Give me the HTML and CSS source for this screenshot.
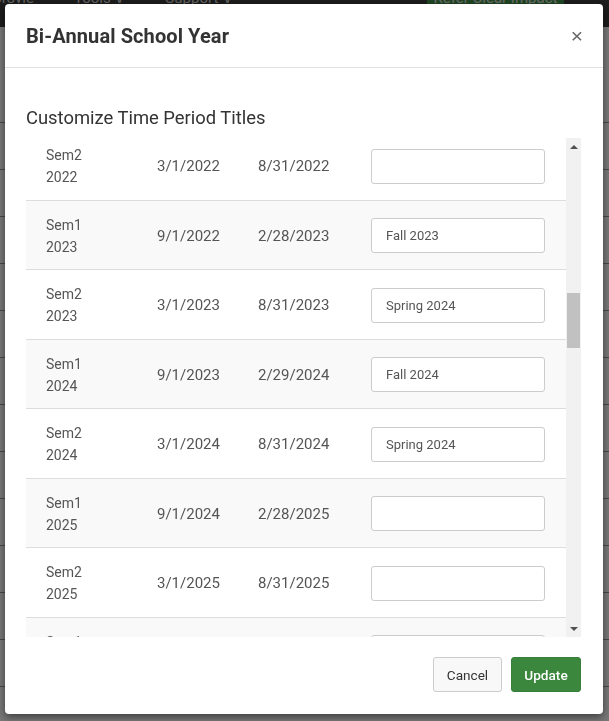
FILE: index.html
```html
<!DOCTYPE html>
<html lang="en">
<head>
<meta charset="UTF-8">
<meta name="viewport" content="width=device-width, initial-scale=1.0">
<title>Bi-Annual School Year</title>
<link rel="stylesheet" href="styles.css">
</head>
<body>

<div class="page">
  <div class="topnav">
    <span class="nav-item nav-first">Improvie</span>
    <span class="nav-item">Tools &#8744;</span>
    <span class="nav-item">Support &#8744;</span>
    <span class="nav-spacer"></span>
    <span class="nav-refer">Refer Clear Impact</span>
  </div>
  <div class="page-body">
    <div class="page-row"></div>
    <div class="page-row"></div>
    <div class="page-row"></div>
    <div class="page-row"></div>
    <div class="page-row"></div>
    <div class="page-row"></div>
    <div class="page-row"></div>
    <div class="page-row"></div>
    <div class="page-row"></div>
    <div class="page-row"></div>
    <div class="page-row"></div>
    <div class="page-row"></div>
    <div class="page-row"></div>
  </div>
</div>

<div class="backdrop"></div>

<div class="modal">
  <div class="modal-header">
    <h3 class="modal-title">Bi-Annual School Year</h3>
    <button class="close">&times;</button>
  </div>
  <div class="modal-body">
    <h4 class="section-title">Customize Time Period Titles</h4>
    <div class="period-scroll">
      <div class="period-view">
        <table class="period-table">
          <tbody id="periods"></tbody>
        </table>
      </div>
      <div class="scrollbar">
        <div class="sb-btn"><span class="arrow-up"></span></div>
        <div class="sb-track"><div class="sb-thumb"></div></div>
        <div class="sb-btn"><span class="arrow-down"></span></div>
      </div>
    </div>
  </div>
  <div class="modal-footer">
    <button class="btn btn-default">Cancel</button>
    <button class="btn btn-success">Update</button>
  </div>
</div>

<script>
  const tbody = document.getElementById('periods');
  const titles = {
    'Sem1 2023': 'Fall 2023',
    'Sem2 2023': 'Spring 2024',
    'Sem1 2024': 'Fall 2024',
    'Sem2 2024': 'Spring 2024'
  };

  function febEnd(year) {
    return year % 4 === 0 ? 29 : 28;
  }

  // only the periods that fit in the scrolled view
  const periods = [];
  for (let year = 2022; year <= 2026; year++) {
    for (let sem = 1; sem <= 2; sem++) {
      if (year === 2022 && sem === 1) continue;
      if (year === 2026 && sem === 2) continue;
      periods.push({ sem, year });
    }
  }

  periods.forEach(p => {
    const key = `Sem${p.sem} ${p.year}`;
    const start = p.sem === 1 ? `9/1/${p.year - 1}` : `3/1/${p.year}`;
    const end = p.sem === 1 ? `2/${febEnd(p.year)}/${p.year}` : `8/31/${p.year}`;
    const row = document.createElement('tr');
    if (p.sem === 1) row.className = 'striped';
    row.innerHTML =
      `<td class="col-name">Sem${p.sem}<br>${p.year}</td>` +
      `<td class="col-date col-start">${start}</td>` +
      `<td class="col-date col-end">${end}</td>` +
      `<td class="col-title"><input class="form-control" type="text" value="${titles[key] || ''}"></td>`;
    tbody.appendChild(row);
  });
</script>

</body>
</html>
```

FILE: styles.css
```css
* {
  box-sizing: border-box;
}
body {
  font-family: Roboto, "Liberation Sans", Arial, sans-serif;
  margin: 0;
  width: 609px;
  height: 721px;
  overflow: hidden;
  background: #ffffff;
}
.page {
  height: 721px;
}
.topnav {
  display: flex;
  align-items: flex-start;
  height: 27px;
  background: #3c3c3c;
  color: #cfcfcf;
  font-size: 15px;
  overflow: hidden;
}
.nav-item {
  margin-left: 40px;
  line-height: 20px;
  margin-top: -12px;
}
.nav-first {
  margin-left: -24px;
}
.nav-spacer {
  flex: 1;
}
.nav-refer {
  background: #43934a;
  color: #e6e6e6;
  width: 137px;
  text-align: center;
  margin-right: 45px;
  height: 22px;
  line-height: 20px;
  margin-top: -12px;
}
.page-body {
  padding-top: 95px;
}
.page-row {
  height: 47px;
  border-top: 1px solid #9a9a9a;
}
.backdrop {
  position: fixed;
  inset: 0;
  background: rgba(0, 0, 0, 0.53);
}
.modal {
  position: fixed;
  top: 4px;
  left: 5px;
  width: 598px;
  height: 710px;
  background: #ffffff;
  border-radius: 4px;
  box-shadow: 0 3px 9px rgba(0, 0, 0, 0.5);
  display: flex;
  flex-direction: column;
}
.modal-header {
  display: flex;
  align-items: center;
  justify-content: space-between;
  height: 64px;
  padding: 0 21px;
  border-bottom: 1px solid #e2e2e2;
}
.modal-title {
  margin: 0;
  font-size: 20px;
  font-weight: bold;
  color: #333333;
  letter-spacing: 0.1px;
}
.close {
  background: none;
  border: none;
  padding: 0;
  margin-right: -1px;
  font-size: 21px;
  color: #666666;
  cursor: pointer;
  font-family: "Liberation Sans", Arial, sans-serif;
}
.modal-body {
  flex: 1;
  padding: 0 22px 0 21px;
}
.section-title {
  margin: 39px 0 9px;
  font-size: 18.4px;
  line-height: 22px;
  font-weight: normal;
  color: #333333;
}
.period-scroll {
  display: flex;
  height: 499px;
}
.period-view {
  flex: 1;
  overflow: hidden;
}
.period-table {
  width: 100%;
  margin-top: -7px;
  border-collapse: collapse;
  font-size: 14px;
  color: #555555;
}
.period-table td {
  padding: 13px 0 11px;
  line-height: 22.25px;
  border-top: 1px solid #dddddd;
  vertical-align: middle;
}
.period-table tr:first-child td {
  border-top: none;
}
.period-table tr.striped {
  background: #f9f9f9;
}
.col-name {
  width: 131px;
  padding-left: 20px !important;
}
.col-date {
  font-size: 15px;
}
.col-start {
  width: 101px;
}
.col-end {
  width: 113px;
}
.col-title {
  padding-right: 20px !important;
}
.form-control {
  display: block;
  width: 174px;
  height: 35px;
  padding: 0 14px;
  border: 1px solid #cccccc;
  border-radius: 3px;
  font-family: inherit;
  font-size: 13px;
  color: #555555;
  background: #ffffff;
}
.scrollbar {
  width: 15px;
  background: #f1f1f1;
  display: flex;
  flex-direction: column;
}
.sb-btn {
  height: 17px;
  display: flex;
  align-items: center;
  justify-content: center;
}
.arrow-up {
  width: 0;
  height: 0;
  border-left: 4px solid transparent;
  border-right: 4px solid transparent;
  border-bottom: 4px solid #505050;
}
.arrow-down {
  width: 0;
  height: 0;
  border-left: 4px solid transparent;
  border-right: 4px solid transparent;
  border-top: 4px solid #505050;
}
.sb-track {
  flex: 1;
  padding: 0 1px;
}
.sb-thumb {
  margin-top: 138px;
  height: 55px;
  background: #c1c1c1;
}
.modal-footer {
  display: flex;
  justify-content: flex-end;
  gap: 9px;
  padding: 20px 22px 22px;
}
.btn {
  height: 35px;
  padding: 0;
  border-radius: 3px;
  font-family: inherit;
  font-size: 13.6px;
  cursor: pointer;
}
.btn-default {
  width: 69px;
  background: #f8f8f8;
  border: 1px solid #cccccc;
  color: #333333;
}
.btn-success {
  width: 70px;
  background: #3a873d;
  border: 1px solid #377f3a;
  color: #ffffff;
  font-weight: 500;
}
```
